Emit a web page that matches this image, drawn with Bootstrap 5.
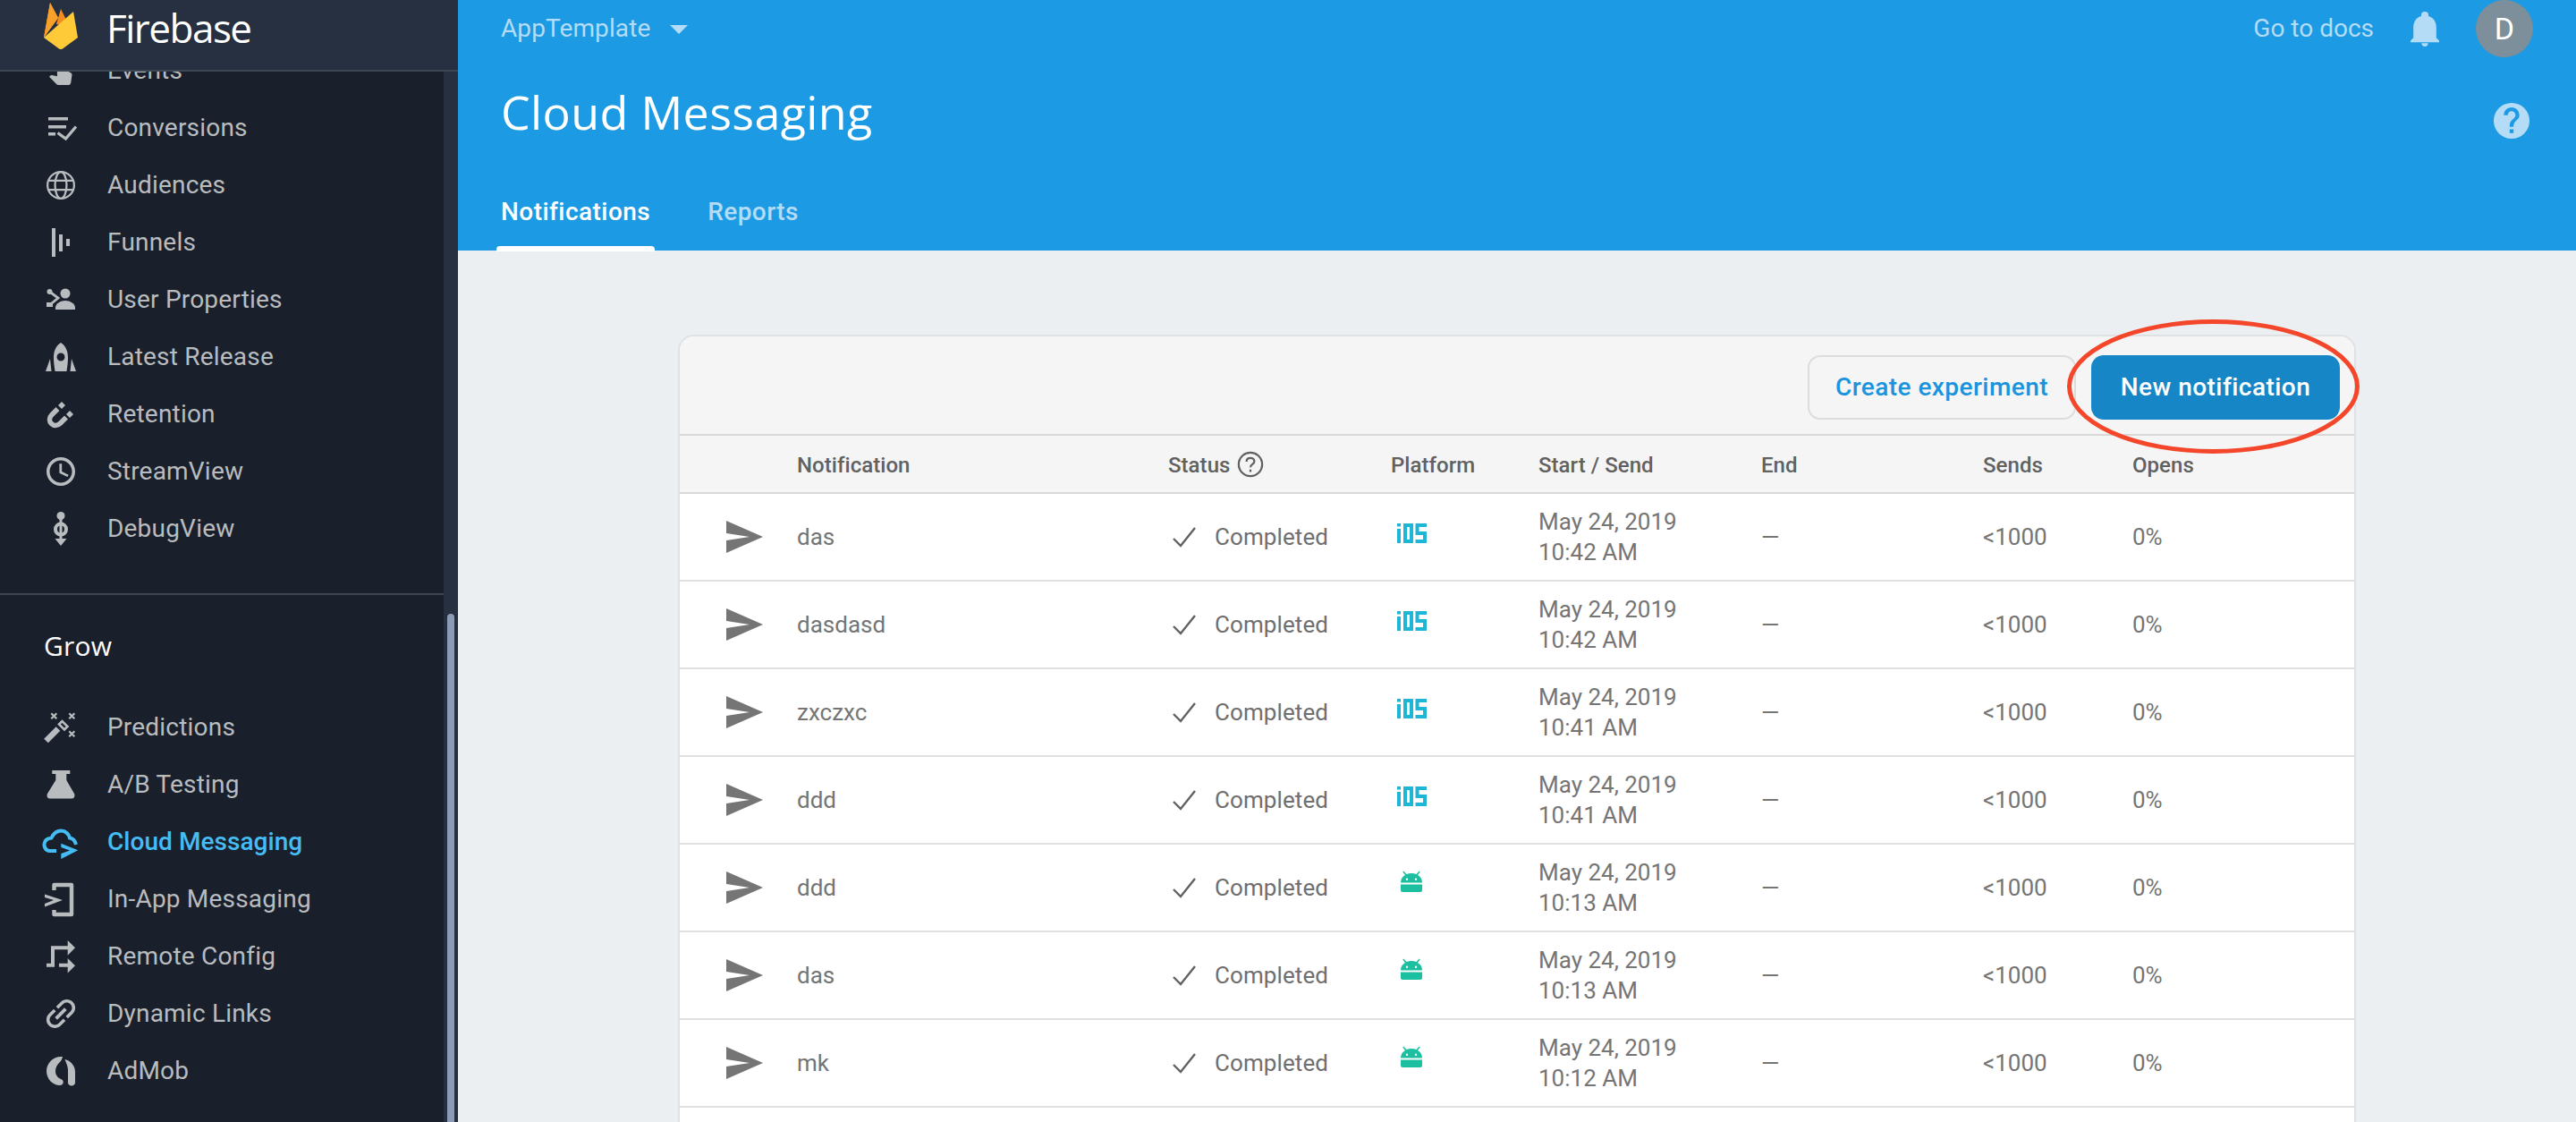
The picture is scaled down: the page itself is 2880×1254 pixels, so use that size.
<!DOCTYPE html>
<html lang="en">
<head>
    <meta charset="UTF-8">
    <title>Cloud Messaging - Firebase</title>
    <link href="https://cdn.jsdelivr.net/npm/bootstrap@5.3.0/dist/css/bootstrap.min.css" rel="stylesheet">
    <style>
        html, body { height: 100%; }
        body { overflow: hidden; background: #ebeff2; font-family: Roboto, "Liberation Sans", sans-serif; }
        .fb-shell { height: 1254px; }
        .fb-side { width: 512px; background: #263040; }
        .fb-brand { height: 80px; background: #263040; border-bottom: 2px solid #3d4653; padding-left: 49px; gap: 32px; position: relative; z-index: 2; }
        .fb-brand-name { font-family: "Open Sans", Roboto, sans-serif; font-size: 44px; color: #fff; letter-spacing: -1.5px; margin-top: -16px; }
        .fb-logo { margin-top: -20px; }
        .fb-scroll { height: 1174px; position: relative; overflow: hidden; }
        .fb-track { width: 496px; background: #1a202b; height: 100%; overflow: hidden; }
        .fb-thumb { position: absolute; left: 500px; top: 606px; width: 8px; height: 600px; background: #8c9cb5; border-radius: 4px; }
        .fb-items { margin: 0; padding: 0; list-style: none; }
        .fb-item { height: 64px; padding-left: 52px; gap: 36px; font-size: 28px; color: #b9bcbf; letter-spacing: .2px; }
        .fb-item svg { width: 32px; height: 32px; fill: #b9bcbf; stroke: none; flex: none; overflow: visible; }
        .fb-item svg .ln { fill: none; stroke: #b9bcbf; }
        .fb-item.active-item { color: #45bcf4; font-weight: 500; letter-spacing: .05px; }
        .fb-item.active-item svg { fill: #45bcf4; }
        .fb-item.active-item svg .ln { stroke: #45bcf4; }
        .fb-first { margin-top: -33px; }
        .fb-divider { border-top: 2px solid #3d4653; margin: 40px 0 0; }
        .fb-group { font-family: "Open Sans", Roboto, sans-serif; color: #fff; font-size: 30px; letter-spacing: .2px; padding: 34px 0 0 49px; height: 116px; }
        .fb-main { min-width: 0; }
        .fb-head { height: 280px; background: #1c9be4; padding: 0 48px 0 48px; position: relative; }
        .fb-topbar { height: 64px; }
        .fb-project { font-size: 28px; color: #b4dcf6; letter-spacing: .1px; gap: 22px; }
        .fb-caret { width: 0; height: 0; border-left: 10px solid transparent; border-right: 10px solid transparent; border-top: 10px solid #b4dcf6; margin-top: 2px; }
        .fb-docs { font-size: 28px; color: #b4dcf6; letter-spacing: 0; }
        .fb-bell { width: 32px; height: 39px; margin: 0 41px; fill: #b4dcf6; }
        .fb-avatar { width: 64px; height: 64px; background: #7c8f9b; color: #fff; font-size: 34px; }
        .fb-titlerow { margin-top: 30px; }
        .fb-title { font-family: "Open Sans", Roboto, sans-serif; font-size: 52px; color: #fff; font-weight: 400; margin: 0; letter-spacing: .35px; }
        .fb-help { width: 40px; height: 40px; margin: 20px 4px 0 0; fill: #b4dcf6; }
        .fb-tabs { gap: 64px; margin-top: 60px; }
        .fb-tab { font-size: 28px; color: #b4dcf6; font-weight: 500; letter-spacing: .45px; padding-bottom: 23px; position: relative; }
        .fb-tab.on { color: #fff; }
        .fb-tab.on::after { content: ""; position: absolute; left: -5px; right: -5px; bottom: 0; height: 6px; background: #fff; border-radius: 4px 4px 0 0; }
        .fb-body { padding: 96px 248px 0; position: relative; }
        .fb-panel { background: #fff; border-radius: 16px 16px 0 0; box-shadow: 0 0 0 2px #dfe1e3; height: 900px; overflow: hidden; }
        .fb-tools { height: 111px; background: #f5f5f5; padding: 4px 16px 0 0; gap: 17px; border-bottom: 2px solid #d8d8d8; }
        .fb-btn-line { height: 72px; width: 300px; border: 2px solid #dcdcdc; border-radius: 14px; background: transparent; color: #1a94dd; font-size: 28px; font-weight: 500; letter-spacing: .45px; padding: 0; }
        .fb-btn-fill { height: 72px; width: 278px; border: 0; border-radius: 14px; background: #1686c6; color: #fff; font-size: 28px; font-weight: 500; letter-spacing: .45px; padding: 0; }
        .fb-ring { position: absolute; left: 1799px; top: 77px; width: 327px; height: 150px; pointer-events: none; }
        .fb-table { table-layout: fixed; width: 1872px; margin: 0; font-size: 26px; color: #757575; }
        .fb-table th { background: #f5f5f5; height: 64px; font-weight: 500; color: #616161; font-size: 24px; letter-spacing: .05px; padding: 2px 0 0; vertical-align: middle; border-bottom: 2px solid #d8d8d8; }
        .fb-table td { height: 98px; padding: 0; vertical-align: middle; border-bottom: 2px solid #e0e0e0; line-height: 34px; font-size: 26px; color: #757575; box-shadow: none; }
        .fb-date { font-size: 25px; }
        .fb-send { width: 41px; height: 36px; fill: #757575; display: block; margin-left: 52px; }
        .fb-check { width: 28px; height: 24px; fill: none; stroke: #616161; stroke-width: 2.4; margin: 0 20px 0 4px; }
        .fb-done { color: #6f6f6f; font-size: 26px; letter-spacing: .1px; }
        .fb-qmark { width: 30px; height: 30px; fill: none; stroke: #616161; margin-left: 8px; vertical-align: -6px; }
        .fb-ios { width: 33px; height: 22px; fill: #1eb6d6; display: block; margin: -8px 0 0 7px; }
        .fb-droid { width: 24px; height: 24px; fill: #1cbfa0; display: block; margin: -14px 0 0 11px; }
    </style>
</head>
<body>
<div class="d-flex fb-shell">
    <aside class="fb-side d-flex flex-column flex-shrink-0">
        <div class="fb-brand d-flex align-items-center flex-shrink-0">
            <svg class="fb-logo" width="38" height="52" viewBox="0 0 38 52">
                <path d="M0 39 7 0l9 17z" fill="#ffa726"/>
                <path d="M14 24 19 7l10 20z" fill="#f58c1e"/>
                <path d="M0 39 7 0l9 17z" fill="#f9a02a"/>
                <path d="M0 39 33 10l5 29-17 12.500q-2 1-4 0z" fill="#ffca38"/>
            </svg>
            <span class="fb-brand-name">Firebase</span>
        </div>
        <div class="fb-scroll">
            <div class="fb-track">
                <ul class="fb-items fb-first">
                    <li class="fb-item d-flex align-items-center"><svg viewBox="3 5.200 18.800 18.800"><path d="M9 11.240V7.500C9 6.120 10.120 5 11.500 5S14 6.120 14 7.500v3.740c1.210-.81 2-2.180 2-3.740C16 5.010 13.990 3 11.500 3S7 5.010 7 7.500c0 1.560.79 2.930 2 3.740zm9.840 4.630l-4.540-2.260c-.17-.07-.35-.11-.54-.11H13v-6c0-.83-.67-1.500-1.500-1.500S10 6.670 10 7.500v10.740l-3.430-.72c-.08-.01-.15-.03-.24-.03-.31 0-.59.13-.79.33l-.79.8 4.940 4.940c.27.27.65.44 1.060.44h6.790c.75 0 1.330-.55 1.440-1.280l.75-5.270c.01-.07.02-.14.02-.2 0-.62-.38-1.160-.91-1.380z"/></svg>Events</li>
                    <li class="fb-item d-flex align-items-center"><svg viewBox="0 0 32 32"><path d="M2 4h22v3.500H2zM2 13h20v3.500H2zM2 21h8v3.500H2z"/><path class="ln" stroke-width="3.300" d="M12.500 21.500 21.500 28 33 14.500"/></svg>Conversions</li>
                    <li class="fb-item d-flex align-items-center"><svg viewBox=".6 .6 22.800 22.800"><g class="ln" stroke-width="1.600"><circle cx="12" cy="12" r="10.600"/><ellipse cx="12" cy="12" rx="4.600" ry="10.600"/><path d="M2 8.400h20M2 15.600h20"/></g></svg>Audiences</li>
                    <li class="fb-item d-flex align-items-center"><svg viewBox="0 0 32 32"><path d="M6 0h4v32H6zM14 7h4v19h-4zM22 12h4v8h-4z"/></svg>Funnels</li>
                    <li class="fb-item d-flex align-items-center"><svg viewBox="0 0 32 32"><circle cx="21" cy="9" r="5.500"/><path d="M10 27v-2c0-5 6-8 11-8s11 3 11 8v2z"/><circle cx="3.500" cy="7" r="3"/><path d="M0 19h7v5H0z"/><path class="ln" stroke-width="2.800" d="M3.500 7 13 14 4 21.500"/></svg>User Properties</li>
                    <li class="fb-item d-flex align-items-center"><svg viewBox="0 0 32 32"><path fill-rule="evenodd" d="M16 0C22 4 24 10 24 17 24 23 23 28 22.500 32H9.500C9 28 8 23 8 17 8 10 10 4 16 0zm0 11.500a4.500 4.500 0 1 0 0 9 4.500 4.500 0 0 0 0-9z"/><path d="M4 18l1.500 14H-1zM28 18l-1.500 14H33z"/></svg>Latest Release</li>
                    <li class="fb-item d-flex align-items-center"><svg viewBox="0 0 32 32"><path class="ln" stroke-width="5.500" d="M12.500 10 6 16.500C2.500 20 3 24 5.500 26.500 8 29 12 29.500 15.500 26L22 19.500"/><path d="M17 2l4 4-4 4-4-4zM26 12l4 4-4 4-4-4z"/></svg>Retention</li>
                    <li class="fb-item d-flex align-items-center"><svg viewBox="1 1 22 22"><path d="M12 1C5.900 1 1 5.900 1 12s4.900 11 11 11 11-4.900 11-11S18.100 1 12 1zm0 19.600c-4.700 0-8.600-3.900-8.600-8.600S7.300 3.400 12 3.400s8.600 3.900 8.600 8.600-3.900 8.600-8.600 8.600z"/><path d="M12.800 6h-1.900v7.200l6.200 3 .9-1.600-5.200-2.600z"/></svg>StreamView</li>
                    <li class="fb-item d-flex align-items-center"><svg viewBox="0 0 32 32"><circle cx="16" cy="1.500" r="4.500"/><path d="M14.500 4h3v24h-3zM9.500 27h13L16 35z"/><circle class="ln" cx="16" cy="16.600" r="6" stroke-width="4"/></svg>DebugView</li>
                </ul>
                <hr class="fb-divider opacity-100">
                <div class="fb-group">Grow</div>
                <ul class="fb-items">
                    <li class="fb-item d-flex align-items-center"><svg viewBox="0 0 32 32"><path class="ln" stroke-width="6.500" d="M-.5 31 13 17.500"/><path class="ln" stroke-width="2.600" d="M14 12.500l3.500-3.500 6 6-3.500 3.500z"/><path class="ln" stroke-width="2.200" d="M5.300 .3l6 6M11.300 .3l-6 6M25.300 .3l6 6M31.300 .3l-6 6M25.300 20.300l6 6M31.300 20.300l-6 6"/></svg>Predictions</li>
                    <li class="fb-item d-flex align-items-center"><svg viewBox="0 0 32 32"><path d="M6.300 0H26.300V4H22.300V11L31 26C32 28 31.300 31.500 28.500 31.500H3.500C.7 31.500 0 28 1 26L10.300 11V4H6.300z"/></svg>A/B Testing</li>
                    <li class="fb-item active-item d-flex align-items-center"><svg viewBox="0 0 32 32"><path class="ln" stroke-width="4" d="M11 26H3.500C-1 26-3 21-2.500 18-2 14.500 1 12 5.500 11.500 8 6 12 3.500 16.500 3.500 21.500 3.500 25 7.500 26 11.500 29.500 12 32 15 33 19"/><path d="M16.300 17.700 35.300 25.300 16.300 35V29L26 25.500 16.300 22z"/></svg>Cloud Messaging</li>
                    <li class="fb-item d-flex align-items-center"><svg viewBox="0 0 32 32"><path class="ln" stroke-width="4.400" stroke-linejoin="round" d="M8.500 6V0H28V33H8.500V28"/><path d="M-2 10.500 18 17-2 24.500V21L8 17-2 14z"/></svg>In-App Messaging</li>
                    <li class="fb-item d-flex align-items-center"><svg viewBox="0 0 32 32"><path class="ln" stroke-width="4" d="M0 25.700H7V6.300H24M14 25.700H24"/><path d="M23.700-2 32 6.300 23.700 14.700zM23.700 18 32 26.300 23.700 34.500z"/></svg>Remote Config</li>
                    <li class="fb-item d-flex align-items-center"><svg viewBox="3.500 3.500 17 17"><path transform="rotate(-45 12 12)" d="M3.900 12c0-1.710 1.390-3.100 3.100-3.100h4V7H7c-2.760 0-5 2.240-5 5s2.240 5 5 5h4v-1.900H7c-1.710 0-3.100-1.390-3.100-3.100zM8 13h8v-2H8v2zm9-6h-4v1.900h4c1.710 0 3.100 1.390 3.100 3.100s-1.390 3.100-3.100 3.100h-4V17h4c2.760 0 5-2.240 5-5s-2.240-5-5-5z"/></svg>Dynamic Links</li>
                    <li class="fb-item d-flex align-items-center"><svg viewBox="0 0 32 32"><path d="M18 0C8-1 0 7 0 16 0 25 7 32 15 32 19 32 20 27 17 25.500 13 24 10 21 10 16 10 12 12 9 14 7 16 5 17.500 3 18 0z"/><path d="M20.500 3C27 4.500 32 10 32 17V29C32 33.500 24 33.500 24 29L24 15C24 11 22 7 20.500 3z"/></svg>AdMob</li>
                </ul>
            </div>
            <div class="fb-thumb"></div>
        </div>
    </aside>
    <main class="fb-main flex-grow-1">
        <header class="fb-head">
            <div class="fb-topbar d-flex align-items-center justify-content-between">
                <div class="fb-project d-flex align-items-center">AppTemplate<span class="fb-caret"></span></div>
                <div class="d-flex align-items-center">
                    <span class="fb-docs">Go to docs</span>
                    <svg class="fb-bell" viewBox="2 0 20 24" preserveAspectRatio="none"><path d="M12 24c1.300 0 2.300-1 2.300-2.300H9.700C9.700 23 10.700 24 12 24zm8-6v-7c0-3.900-2-7-5.500-7.900V2c0-1.300-1.200-2-2.500-2S9.500.7 9.500 2v1.100C6 4 4 7.100 4 11v7l-2 2v1h20v-1z"/></svg>
                    <span class="fb-avatar rounded-circle d-flex align-items-center justify-content-center">D</span>
                </div>
            </div>
            <div class="fb-titlerow d-flex justify-content-between align-items-center">
                <h1 class="fb-title">Cloud Messaging</h1>
                <svg class="fb-help" viewBox="0 0 24 24"><path d="M12 0a12 12 0 1 0 0 24 12 12 0 0 0 0-24zm1.300 20.300h-2.600v-2.600h2.600zm2.700-9.300-1.200 1.200c-1 1-1.500 1.800-1.500 3.800h-2.600v-.6c0-1.500.5-2.800 1.500-3.800l1.600-1.600c.5-.5.8-1.100.8-1.800 0-1.400-1.200-2.600-2.600-2.600S9.400 6.800 9.400 8.200H6.800c0-2.900 2.300-5.200 5.200-5.200s5.200 2.300 5.200 5.200c0 1.100-.5 2.200-1.200 2.800z"/></svg>
            </div>
            <div class="fb-tabs d-flex">
                <span class="fb-tab on">Notifications</span>
                <span class="fb-tab">Reports</span>
            </div>
        </header>
        <section class="fb-body">
            <div class="fb-panel">
                <div class="fb-tools d-flex align-items-center justify-content-end">
                    <button type="button" class="btn fb-btn-line">Create experiment</button>
                    <button type="button" class="btn fb-btn-fill">New notification</button>
                </div>
                <table class="table fb-table">
                    <colgroup>
                        <col style="width:131px"><col style="width:415px"><col style="width:249px"><col style="width:165px"><col style="width:249px"><col style="width:248px"><col style="width:167px"><col>
                    </colgroup>
                    <thead>
                        <tr>
                            <th></th>
                            <th>Notification</th>
                            <th>Status<svg class="fb-qmark" viewBox="0 0 24 24"><circle cx="12" cy="12" r="10.500" stroke-width="1.800"/><path d="M8.500 9.500c0-2 1.500-3.200 3.500-3.200s3.500 1.300 3.500 3c0 2.500-3.500 2.600-3.500 5.200M12 16.500v2.200" stroke-width="1.800"/></svg></th>
                            <th>Platform</th>
                            <th>Start / Send</th>
                            <th>End</th>
                            <th>Sends</th>
                            <th>Opens</th>
                        </tr>
                    </thead>
                    <tbody id="rows"></tbody>
                </table>
            </div>
            <svg class="fb-ring" viewBox="0 0 327 150"><ellipse cx="163.500" cy="75" rx="161" ry="72.500" fill="none" stroke="#f4462a" stroke-width="5"/></svg>
        </section>
    </main>
</div>
<script src="https://cdn.jsdelivr.net/npm/bootstrap@5.3.0/dist/js/bootstrap.bundle.min.js"></script>
<script>
    const sendIcon = '<svg class="fb-send" viewBox="0 0 41 36"><path d="M0 0 41 18 0 36V22l26-4L0 14z"/></svg>';
    const checkIcon = '<svg class="fb-check" viewBox="0 0 28 24"><path d="M2 14l8 8L26 2"/></svg>';
    const iosIcon = '<svg class="fb-ios" viewBox="0 0 33 22"><path fill-rule="evenodd" d="M0 6h4v16H0zM0 0h4v3.500H0zM7 0h11v22H7zm4 4v14h3V4zM20.500 0H33v4h-8.500v5H33v13H20.500v-4H29v-5h-8.500z"/></svg>';
    const droidIcon = '<svg class="fb-droid" viewBox="0 0 24 24"><path fill-rule="evenodd" d="M0 15.500h24V22c0 1-1 2-2 2H2c-1 0-2-1-2-2zM0 13.500C0 9.500 2 6.500 5 5L2.300 1.500l1-1L6.500 4c3.500-1.300 7.500-1.300 11 0L20.700.5l1 1L19 5c3 1.500 5 4.500 5 8.500zM7 8.500a1.200 1.200 0 1 0 0 2.400 1.200 1.200 0 0 0 0-2.400zm10 0a1.200 1.200 0 1 0 0 2.400 1.200 1.200 0 0 0 0-2.400z"/></svg>';

    // notification rows from the report
    const notifications = [
        ['das', iosIcon, '10:42 AM'],
        ['dasdasd', iosIcon, '10:42 AM'],
        ['zxczxc', iosIcon, '10:41 AM'],
        ['ddd', iosIcon, '10:41 AM'],
        ['ddd', droidIcon, '10:13 AM'],
        ['das', droidIcon, '10:13 AM'],
        ['mk', droidIcon, '10:12 AM']
    ];
    document.getElementById('rows').innerHTML = notifications.map(n => `
        <tr>
            <td>${sendIcon}</td>
            <td>${n[0]}</td>
            <td><span class="d-flex align-items-center">${checkIcon}<span class="fb-done">Completed</span></span></td>
            <td>${n[1]}</td>
            <td class="fb-date">May 24, 2019<br>${n[2]}</td>
            <td>—</td>
            <td>&lt;1000</td>
            <td>0%</td>
        </tr>`).join('') + '<tr><td colspan="8"></td></tr>';
</script>
</body>
</html>
